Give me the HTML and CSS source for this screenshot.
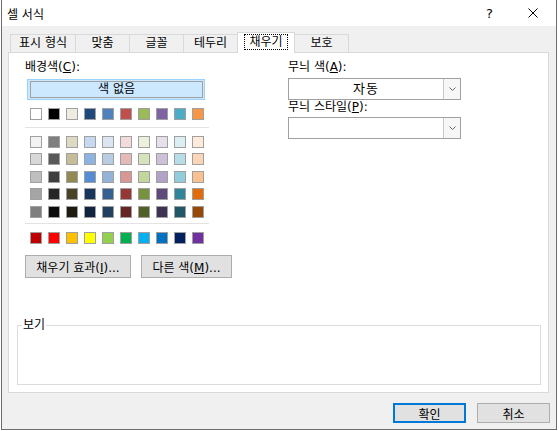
FILE: index.html
```html
<!DOCTYPE html>
<html>
<head>
<meta charset="utf-8">
<link rel="stylesheet" href="styles.css">
</head>
<body>

<div class="dialog">
  <div class="titlebar">
    <span class="title">셀 서식</span>
    <span class="help">?</span>
    <span class="close">
      <svg width="10" height="10" viewBox="0 0 10 10"><path d="M0.5 0.5L9.5 9.5M9.5 0.5L0.5 9.5" stroke="#000" stroke-width="1" fill="none"/></svg>
    </span>
  </div>

  <div class="tabs">
    <div class="tab">표시 형식</div>
    <div class="tab">맞춤</div>
    <div class="tab">글꼴</div>
    <div class="tab">테두리</div>
    <div class="tab selected"><span class="focus">채우기</span></div>
    <div class="tab">보호</div>
  </div>

  <div class="panel">
    <div class="cols">
      <div class="left">
        <div class="label">배경색(<u>C</u>):</div>
        <button class="nocolor"><span>색 없음</span></button>
        <div class="swatches" id="themeRow"></div>
        <div class="sep"></div>
        <div class="swatches" id="tints"></div>
        <div class="sep lower"></div>
        <div class="swatches" id="standard"></div>
        <div class="btnrow">
          <button class="btn wide">채우기 효과(<u>I</u>)...</button>
          <button class="btn more">다른 색(<u>M</u>)...</button>
        </div>
      </div>

      <div class="right">
        <div class="label">무늬 색(<u>A</u>):</div>
        <div class="select">
          <span class="value">자동</span>
          <span class="arrow"><svg width="7" height="4" viewBox="0 0 7 4"><path d="M0.5 0.5L3.5 3.5L6.5 0.5" stroke="#666" fill="none"/></svg></span>
        </div>
        <div class="label second">무늬 스타일(<u>P</u>):</div>
        <div class="select">
          <span class="value"></span>
          <span class="arrow"><svg width="7" height="4" viewBox="0 0 7 4"><path d="M0.5 0.5L3.5 3.5L6.5 0.5" stroke="#666" fill="none"/></svg></span>
        </div>
      </div>
    </div>

    <fieldset class="preview">
      <legend>보기</legend>
      <div class="preview-body"></div>
    </fieldset>
  </div>

  <div class="footer">
    <button class="btn ok">확인</button>
    <button class="btn">취소</button>
  </div>
</div>

<script>
var themeRow = ["#FFFFFF","#000000","#EEECE1","#1F497D","#4F81BD","#C0504D","#9BBB59","#8064A2","#4BACC6","#F79646"];
var tints = [
  "#F2F2F2","#7F7F7F","#DDD9C3","#C6D9F0","#DBE5F1","#F2DCDB","#EBF1DD","#E5E0EC","#DBEEF3","#FDEADA",
  "#D8D8D8","#595959","#C4BD97","#8DB3E2","#B8CCE4","#E5B9B7","#D7E3BC","#CCC1D9","#B7DDE8","#FBD5B5",
  "#BFBFBF","#3F3F3F","#938953","#548DD4","#95B3D7","#D99694","#C3D69B","#B2A2C7","#92CDDC","#FAC08F",
  "#A5A5A5","#262626","#494429","#17365D","#366092","#953734","#76923C","#5F497A","#31859B","#E36C09",
  "#7F7F7F","#0C0C0C","#1D1B10","#0F243E","#244061","#632423","#4F6128","#3F3151","#205867","#974806"
];
var standard = ["#C00000","#FF0000","#FFC000","#FFFF00","#92D050","#00B050","#00B0F0","#0070C0","#002060","#7030A0"];

function fill(id, colors) {
  var box = document.getElementById(id);
  colors.forEach(function (c) {
    var s = document.createElement("span");
    s.className = "swatch";
    s.style.background = c;
    box.appendChild(s);
  });
}
fill("themeRow", themeRow);
fill("tints", tints);
fill("standard", standard);
</script>

</body>
</html>
```

FILE: styles.css
```css
body {
  margin: 0;
  background: #fff;
  font-family: "DejaVu Sans", "Noto Sans CJK KR", sans-serif;
  font-size: 12px;
  color: #000;
}

button {
  font-family: inherit;
  font-size: 12px;
  color: #000;
  padding: 0;
  margin: 0;
}

.dialog {
  margin-left: 1px;
  width: 556px;
  height: 430px;
  box-sizing: border-box;
  border: 1px solid #6d6d6d;
  border-top: 0;
  background: #f0f0f0;
}

/* title bar */
.titlebar {
  height: 26px;
  background: #fff;
  display: flex;
  align-items: center;
  padding-left: 5px;
}

.help {
  margin-left: auto;
  margin-right: 17px;
  font-size: 13px;
}

.close {
  width: 46px;
  height: 26px;
  display: flex;
  align-items: center;
  justify-content: center;
}

/* tabs */
.tabs {
  display: flex;
  align-items: flex-end;
  height: 20px;
  margin: 6px 0 0 8px;
}

.tab {
  height: 18px;
  box-sizing: border-box;
  min-width: 55px;
  padding: 0 8px;
  margin-right: -1px;
  border: 1px solid #d9d9d9;
  border-bottom: 0;
  text-align: center;
  line-height: 16px;
}

.tab.selected {
  position: relative;
  z-index: 1;
  height: 21px;
  margin-bottom: -1px;
  min-width: 58px;
  padding: 1px 6px 0;
  background: #fff;
}

.focus {
  display: inline-block;
  line-height: 14px;
  padding: 0 4px;
  outline: 1px dotted #000;
}

/* tab page */
.panel {
  margin: 0 7px 0 6px;
  height: 341px;
  box-sizing: border-box;
  border: 1px solid #d9d9d9;
  background: #fff;
  display: flex;
  flex-direction: column;
}

.cols {
  display: grid;
  grid-template-columns: 263px 173px;
  padding: 6px 0 0 16px;
}

.label {
  line-height: 16px;
}

.nocolor {
  display: block;
  margin: 4px 0 0 2px;
  width: 178px;
  height: 21px;
  box-sizing: border-box;
  border: 1px solid #99d1ff;
  background: #cce8ff;
  padding: 1px 1px 1px 2px;
}

.nocolor span {
  display: block;
  height: 100%;
  box-sizing: border-box;
  border: 1px solid #a0a0a0;
  line-height: 15px;
}

.swatches {
  display: grid;
  grid-template-columns: repeat(10, 12px);
  column-gap: 6px;
  row-gap: 5.4px;
  margin: 8px 0 0 5px;
}

.swatch {
  width: 12px;
  height: 12px;
  box-sizing: border-box;
  border: 1px solid #a0a0a0;
}

.sep {
  width: 184px;
  height: 1px;
  background: #e3e3e3;
  margin-top: 7px;
}

.sep.lower {
  margin-top: 5px;
}

.btnrow {
  display: flex;
  gap: 10px;
  margin-top: 11px;
}

.btn {
  height: 23px;
  box-sizing: border-box;
  border: 1px solid #adadad;
  background: #e1e1e1;
}

.btn.wide {
  width: 106px;
}

.btn.more {
  width: 91px;
}

/* pattern selects */
.select {
  width: 173px;
  height: 22px;
  box-sizing: border-box;
  border: 1px solid #a0a0a0;
  background: #fff;
  display: flex;
  margin-top: 3px;
}

.select .value {
  flex: 1;
  text-align: center;
  line-height: 20px;
  font-size: 13px;
  letter-spacing: 1px;
}

.select .arrow {
  width: 17px;
  box-sizing: border-box;
  border-left: 1px solid #c8c8c8;
  background: #f7f7f7;
  display: flex;
  align-items: center;
  justify-content: center;
}

.label.second {
  line-height: 15px;
}

.label.second + .select {
  margin-top: 2px;
}

/* preview */
.preview {
  margin: auto 7px 7px 8px;
  padding: 0;
  border: 1px solid #dcdcdc;
}

.preview legend {
  margin-left: 4px;
  padding: 0 1px;
  line-height: 14px;
}

.preview-body {
  height: 52px;
}

/* dialog buttons */
.footer {
  display: flex;
  justify-content: flex-end;
  gap: 11px;
  padding: 10px 6px 0 0;
}

.footer .btn {
  width: 73px;
  height: 20px;
}

.footer .btn.ok {
  border: 2px solid #0078d7;
}
```
